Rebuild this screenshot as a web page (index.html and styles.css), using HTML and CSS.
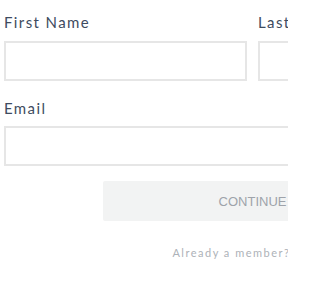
FILE: index.html
```html
<!DOCTYPE html>
<html>
<head>
<meta charset="utf-8">
<link rel="stylesheet" href="styles.css">
</head>
<body>
<div class="page">
<form class="form">
  <div class="row">
    <div class="field">
      <label class="label">First Name</label>
      <input class="input" type="text">
    </div>
    <div class="field">
      <label class="label">Last Name</label>
      <input class="input" type="text">
    </div>
  </div>
  <div class="field field-last">
    <label class="label">Email</label>
    <input class="input" type="email">
  </div>
  <div class="actions">
    <button class="btn" type="button">CONTINUE</button>
  </div>
  <p class="member">Already a member? <a class="link">Log in</a></p>
</form>
</div>
</body>
</html>
```
FILE: styles.css
```css
html, body {
  margin: 0;
  padding: 0;
  overflow: hidden;
  background: #ffffff;
}
.page {
  width: 288px;
  height: 288px;
  overflow: hidden;
}
.form {
  width: 497px;
  padding: 12px 0 0 4px;
  font-family: Lato, "Open Sans", sans-serif;
}
.row {
  display: grid;
  grid-template-columns: 1fr 1fr;
  gap: 11px;
}
.field {
  display: flex;
  flex-direction: column;
  margin-bottom: 17px;
}
.field-last {
  margin-bottom: 15px;
}
.label {
  font-size: 15px;
  letter-spacing: 1.4px;
  color: #3e4b60;
  line-height: 20px;
  margin-bottom: 8px;
}
.row .label {
  margin-bottom: 9px;
}
.input {
  box-sizing: border-box;
  height: 40px;
  border: 2px solid #e6e6e6;
  border-radius: 0;
  margin: 0;
  padding: 0 10px;
  width: 100%;
}
.actions {
  display: flex;
  justify-content: center;
}
.btn {
  width: 299px;
  height: 40px;
  border: none;
  border-radius: 2px;
  background: #f2f3f3;
  color: #9ea3aa;
  font-family: "Liberation Sans", Arial, sans-serif;
  font-size: 13px;
  letter-spacing: 0;
}
.member {
  text-align: center;
  margin: 25px 0 0;
  font-size: 11px;
  letter-spacing: 1.5px;
  color: #adb2b8;
}
.link {
  color: #3e4b60;
}
```
